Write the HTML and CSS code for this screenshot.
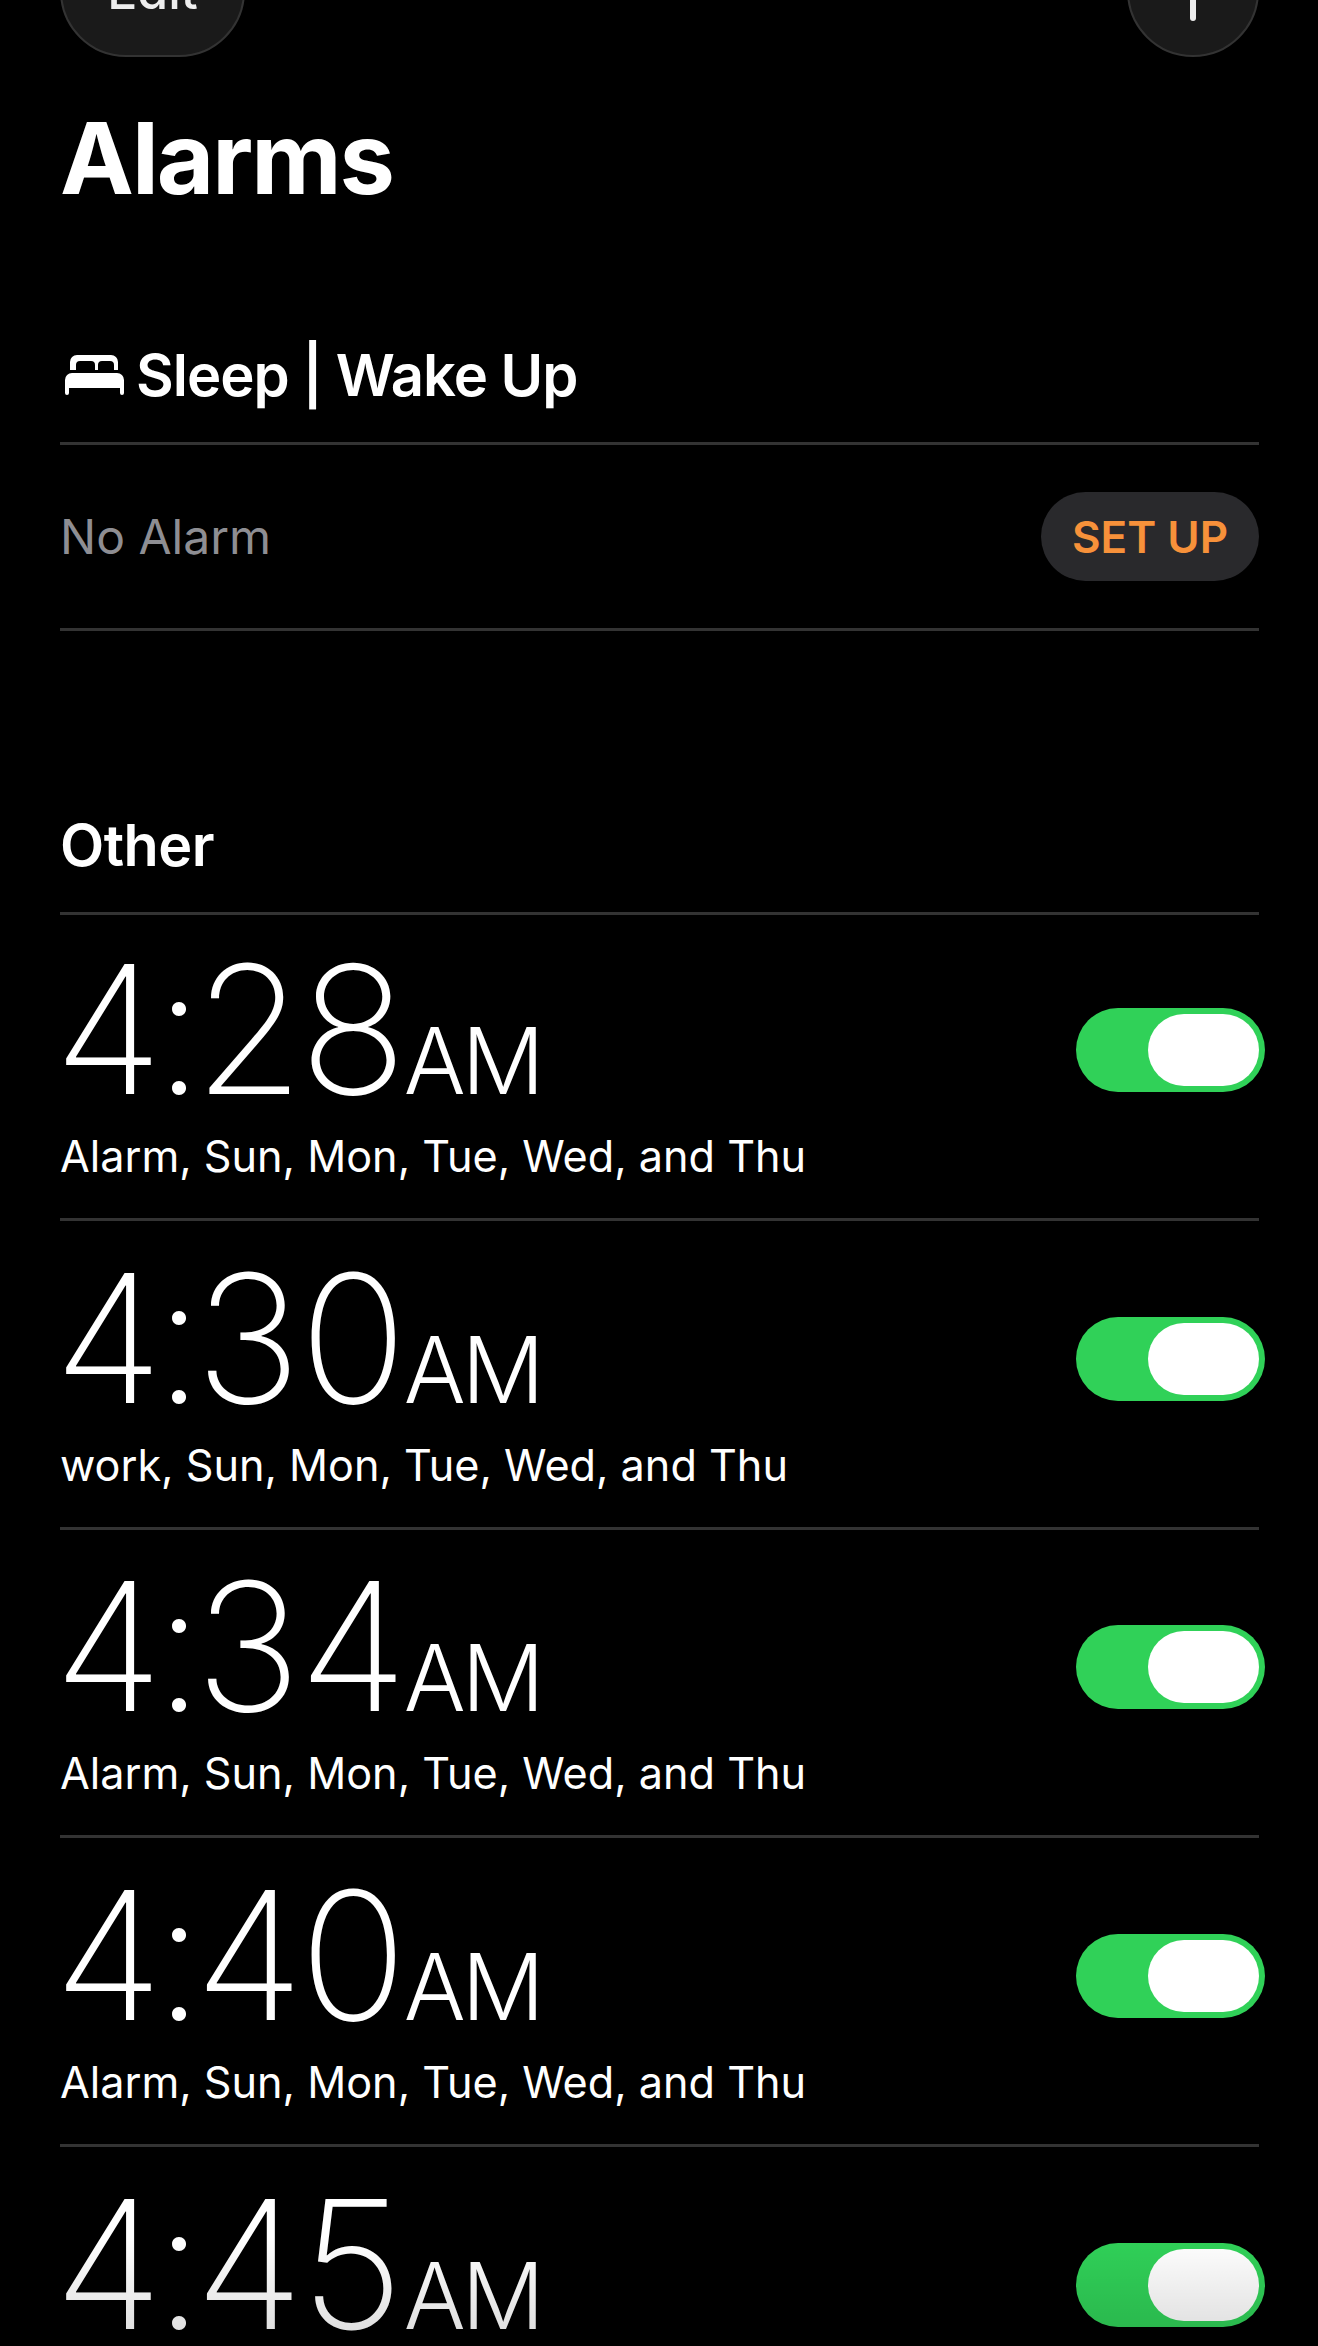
FILE: index.html
```html
<!DOCTYPE html>
<html lang="en">
<head>
    <meta charset="UTF-8">
    <title>Alarms</title>
    <link rel="stylesheet" href="styles.css">
</head>
<body>
    <div class="toolbar">
        <button class="tool-button edit">Edit</button>
        <button class="tool-button add"><span class="plus"></span></button>
    </div>

    <h1 class="title">Alarms</h1>

    <div class="section-head sleep-head">
        <svg class="bed" viewBox="0 0 59 40" width="59" height="40">
            <path fill="#fff" d="M5 15V7a7 7 0 0 1 7-7h34a7 7 0 0 1 7 7v8h-4v-5a4 4 0 0 0-4-4H37a4 4 0 0 0-4 4v5h-3v-5a4 4 0 0 0-4-4H15a4 4 0 0 0-4 4v5z"/>
            <path fill="#fff" d="M7 18h45a7 7 0 0 1 7 7v13a2 2 0 0 1-4 0v-5H4v5a2 2 0 0 1-4 0V25a7 7 0 0 1 7-7z"/>
        </svg>
        <span>Sleep | Wake Up</span>
    </div>
    <div class="sleep-row">
        <span class="no-alarm">No Alarm</span>
        <button class="setup">SET UP</button>
    </div>

    <div class="section-head other-head">Other</div>

    <div class="alarm">
        <div class="alarm-text">
            <div class="time">4:28<span class="ampm">AM</span></div>
            <div class="label">Alarm, Sun, Mon, Tue, Wed, and Thu</div>
        </div>
        <div class="toggle"><div class="thumb"></div></div>
    </div>
    <div class="alarm">
        <div class="alarm-text">
            <div class="time">4:30<span class="ampm">AM</span></div>
            <div class="label">work, Sun, Mon, Tue, Wed, and Thu</div>
        </div>
        <div class="toggle"><div class="thumb"></div></div>
    </div>
    <div class="alarm">
        <div class="alarm-text">
            <div class="time">4:34<span class="ampm">AM</span></div>
            <div class="label">Alarm, Sun, Mon, Tue, Wed, and Thu</div>
        </div>
        <div class="toggle"><div class="thumb"></div></div>
    </div>
    <div class="alarm">
        <div class="alarm-text">
            <div class="time">4:40<span class="ampm">AM</span></div>
            <div class="label">Alarm, Sun, Mon, Tue, Wed, and Thu</div>
        </div>
        <div class="toggle"><div class="thumb"></div></div>
    </div>
    <div class="alarm">
        <div class="alarm-text">
            <div class="time">4:45<span class="ampm">AM</span></div>
        </div>
        <div class="toggle"><div class="thumb"></div></div>
    </div>

    <div class="bottom-fade"></div>
</body>
</html>
```

FILE: styles.css
```css
html, body {
    height: 2346px;
    overflow: hidden;
}

body {
    margin: 0;
    padding: 0 59px 0 60px;
    background-color: #000;
    color: #fff;
    font-family: Inter, "Liberation Sans", sans-serif;
    position: relative;
}

.toolbar {
    display: flex;
    justify-content: space-between;
    margin-top: -75px;
}

.tool-button {
    height: 132px;
    border: 2px solid #333;
    border-radius: 66px;
    background-color: #1a1a1a;
    color: #eee;
    font-family: inherit;
    font-size: 50px;
    font-weight: 500;
    padding: 0;
}

.edit {
    width: 185px;
}

.add {
    width: 132px;
    display: flex;
    justify-content: center;
}

.plus {
    width: 6px;
    height: 94px;
    background-color: #eee;
    border-radius: 3px;
}

.title {
    margin: 41px 0 0;
    font-size: 99px;
    line-height: 120px;
    font-weight: 700;
    letter-spacing: -2px;
}

.section-head {
    font-weight: 600;
    border-bottom: 3px solid #333;
}

.sleep-head {
    display: flex;
    align-items: center;
    gap: 12px;
    margin-top: 121px;
    padding-left: 5px;
    padding-bottom: 31px;
    height: 72px;
    font-size: 58px;
    letter-spacing: -1px;
}

.bed {
    flex: none;
}

.sleep-row {
    display: flex;
    justify-content: space-between;
    align-items: center;
    height: 183px;
    border-bottom: 3px solid #333;
}

.no-alarm {
    color: #8e8e93;
    font-size: 48px;
}

.setup {
    width: 218px;
    height: 89px;
    border: none;
    border-radius: 45px;
    background-color: #29292c;
    color: #f7913a;
    font-family: inherit;
    font-size: 44px;
    font-weight: 600;
    padding: 0;
}

.other-head {
    margin-top: 166px;
    padding-bottom: 18px;
    line-height: 97px;
    font-size: 57.5px;
    letter-spacing: -0.5px;
}

.alarm {
    display: flex;
    justify-content: space-between;
    height: 303px;
    margin-bottom: 2.67px;
    border-bottom: 3px solid #333;
}

.time {
    font-size: 178px;
    line-height: 138px;
    margin: 46px 0 0 -9px;
    font-weight: 200;
    font-variant-numeric: tabular-nums;
    letter-spacing: -11px;
}

.ampm {
    font-size: 92px;
    font-weight: 300;
    letter-spacing: -4px;
    margin-left: 4px;
}

.label {
    font-size: 43.2px;
    line-height: 52px;
}

.toggle {
    width: 189px;
    height: 84px;
    margin: 93px -6px 0 0;
    border-radius: 42px;
    background-color: #30d158;
    display: flex;
    justify-content: flex-end;
    align-items: center;
    padding-right: 6px;
    box-sizing: border-box;
}

.thumb {
    width: 111px;
    height: 72px;
    border-radius: 36px;
    background-color: #fff;
}

/* slight darkening where the list runs off the bottom */
.bottom-fade {
    position: absolute;
    left: 0;
    right: 0;
    bottom: 0;
    height: 110px;
    background: linear-gradient(to bottom, rgba(0, 0, 0, 0), rgba(0, 0, 0, 0.14));
}
```
